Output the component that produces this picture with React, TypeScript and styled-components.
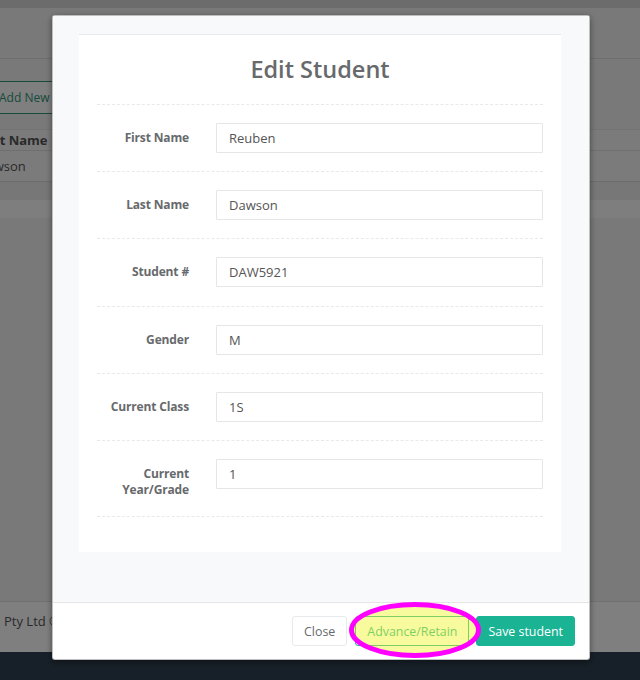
import styled, { createGlobalStyle } from 'styled-components';

const GlobalStyle = createGlobalStyle`
    html, body {
        margin: 0;
        padding: 0;
    }
    body {
        font-family: 'Open Sans', 'Liberation Sans', sans-serif;
        font-size: 13px;
        color: #676a6c;
        background: #f3f3f4;
    }
    * {
        box-sizing: border-box;
    }
`;

const fields = [
    { label: 'First Name', value: 'Reuben' },
    { label: 'Last Name', value: 'Dawson' },
    { label: 'Student #', value: 'DAW5921' },
    { label: 'Gender', value: 'M' },
    { label: 'Current Class', value: '1S' },
    { label: 'Current Year/Grade', value: '1' },
];

export default function App(): JSX.Element {
    return (
        <>
            <GlobalStyle />
            <S_Page>
                <S_TopStrip />
                <S_Header />
                <S_Content>
                    <S_AddNew>Add New</S_AddNew>
                    <S_Table>
                        <S_HeadRow>
                            <S_Cell $shift={3}>Last Name</S_Cell>
                        </S_HeadRow>
                        <S_BodyRow>
                            <S_Cell $shift={2}>Dawson</S_Cell>
                        </S_BodyRow>
                        <S_Band $tone="#eeeeee" />
                        <S_Band $tone="#fdfdfd" />
                    </S_Table>
                </S_Content>
                <S_Footer>Pty Ltd © 2017</S_Footer>
                <S_BottomBar />
            </S_Page>

            <S_Backdrop>
                <S_Modal>
                    <S_ModalBody>
                        <S_Card>
                            <S_Title>Edit Student</S_Title>
                            <S_Form>
                                {fields.map((f) => (
                                    <S_FormRow key={f.label}>
                                        <S_Label>
                                            {f.label === 'Current Year/Grade' ? (
                                                <>
                                                    Current
                                                    <br />
                                                    Year/Grade
                                                </>
                                            ) : (
                                                f.label
                                            )}
                                        </S_Label>
                                        <S_Input defaultValue={f.value} readOnly />
                                    </S_FormRow>
                                ))}
                            </S_Form>
                        </S_Card>
                    </S_ModalBody>
                    <S_ModalFooter>
                        <S_Button $variant="white">Close</S_Button>
                        <S_Highlight>
                            <S_Button $variant="outline">Advance/Retain</S_Button>
                            <S_Ring viewBox="0 0 134 58" aria-hidden>
                                <ellipse
                                    cx="67"
                                    cy="29"
                                    rx="63.5"
                                    ry="25.5"
                                    fill="rgba(240, 245, 40, 0.45)"
                                    stroke="#ff00ff"
                                    strokeWidth="5"
                                />
                            </S_Ring>
                        </S_Highlight>
                        <S_Button $variant="primary">Save student</S_Button>
                    </S_ModalFooter>
                </S_Modal>
            </S_Backdrop>
        </>
    );
}

// background page (sits under the backdrop)
const S_Page = styled.div`
    min-height: 680px;
    display: flex;
    flex-direction: column;
    background: #f3f3f4;
`;
const S_TopStrip = styled.div`
    height: 8px;
    background: #d9d9d9;
`;
const S_Header = styled.div`
    height: 51px;
    border-bottom: 1px solid #dcdcdc;
`;
const S_Content = styled.div`
    padding-top: 22px;
    margin-left: -35px;
`;
const S_AddNew = styled.div`
    display: inline-block;
    height: 33px;
    line-height: 31px;
    padding: 0 8px 0 36px;
    border: 1px solid #2e9676;
    border-radius: 3px;
    font-size: 12px;
    color: #2e9676;
    background: #fff;
    transform: translateX(-3px);
`;
const S_Table = styled.div`
    margin-top: 15px;
    width: 100%;
`;
const S_HeadRow = styled.div`
    height: 22px;
    border-top: 1px solid #e7e7e7;
    border-bottom: 1px solid #dedede;
    display: flex;
    align-items: center;
    font-weight: 700;
    color: #555;
    background: #f6f6f6;
`;
const S_BodyRow = styled.div`
    height: 31px;
    border-bottom: 1px solid #d8d8d8;
    display: flex;
    align-items: center;
    color: #555;
    background: #f7f7f7;
`;
const S_Cell = styled.div<{ $shift?: number }>`
    padding-left: ${(p) => 10 + (p.$shift ?? 0)}px;
`;
const S_Band = styled.div<{ $tone: string }>`
    height: 18px;
    background: ${(p) => p.$tone};
`;
const S_Footer = styled.div`
    margin-top: auto;
    height: 51px;
    border-top: 1px solid #e0e0e0;
    background: #ffffff;
    padding: 10px 0 0 4px;
    color: #555;
`;
const S_BottomBar = styled.div`
    height: 28px;
    background: #2f4050;
`;

// modal
const S_Backdrop = styled.div`
    position: fixed;
    inset: 0;
    background: rgba(0, 0, 0, 0.5);
    display: flex;
    justify-content: center;
    align-items: flex-start;
    padding-left: 2px;
`;
const S_Modal = styled.div`
    margin-top: 15px;
    width: 538px;
    background: #fff;
    border: 1px solid rgba(0, 0, 0, 0.25);
    border-radius: 3px;
    box-shadow: 0 2px 6px rgba(0, 0, 0, 0.45);
`;
const S_ModalBody = styled.div`
    background: #f8f9fb;
    padding: 18px 28px 50px 26px;
`;
const S_Card = styled.div`
    background: #fff;
    border-top: 1px solid #e7eaec;
    padding: 19px 18px 35px;
`;
const S_Title = styled.h2`
    margin: 0;
    text-align: center;
    font-size: 23.5px;
    font-weight: 600;
    line-height: 30px;
    color: #676a6c;
    padding-bottom: 20px;
    border-bottom: 1px dashed #e7eaec;
`;
const S_Form = styled.div`
    display: flex;
    flex-direction: column;
`;
const S_FormRow = styled.div`
    display: grid;
    grid-template-columns: 92px 1fr;
    column-gap: 27px;
    align-items: start;
    padding: 18px 0 18.2px;
    border-bottom: 1px dashed #e7eaec;
`;
const S_Label = styled.label`
    padding-top: 7px;
    text-align: right;
    font-size: 12px;
    font-weight: 700;
    line-height: 16px;
    letter-spacing: -0.15px;
    color: #676a6c;
`;
const S_Input = styled.input`
    height: 30px;
    width: 100%;
    border: 1px solid #e5e6e7;
    border-radius: 1px;
    padding: 0 12px;
    font-family: 'Open Sans', 'Liberation Sans', sans-serif;
    font-size: 13px;
    color: #555;
    background: #fff;
    outline: none;
`;
const S_ModalFooter = styled.div`
    border-top: 1px solid #e5e5e5;
    padding: 13px 14px 13px;
    display: flex;
    justify-content: flex-end;
    align-items: center;
    gap: 7px;
`;
const S_Button = styled.button<{ $variant: 'white' | 'outline' | 'primary' }>`
    height: 30px;
    padding: 0 11px;
    border-radius: 3px;
    font-family: 'Open Sans', 'Liberation Sans', sans-serif;
    font-size: 12.4px;
    cursor: pointer;
    border: 1px solid
        ${(p) => (p.$variant === 'white' ? '#e7eaec' : '#1ab394')};
    background: ${(p) => (p.$variant === 'primary' ? '#1ab394' : '#fff')};
    color: ${(p) =>
        p.$variant === 'primary' ? '#fff' : p.$variant === 'outline' ? '#1ab394' : '#676a6c'};
`;
const S_Highlight = styled.div`
    position: relative;
    margin-left: 1px;
`;
const S_Ring = styled.svg`
    position: absolute;
    left: -7px;
    top: -15px;
    width: 134px;
    height: 58px;
    pointer-events: none;
`;
